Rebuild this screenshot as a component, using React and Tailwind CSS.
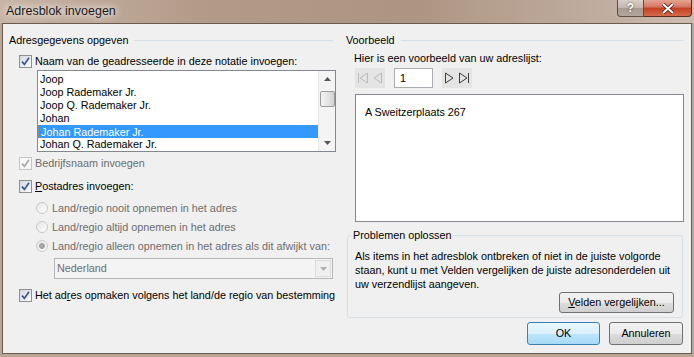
import React from 'react';

function Check({ disabled }) {
  return (
    <span
      className={`w-[13px] h-[13px] shrink-0 border flex items-center justify-center ${
        disabled ? 'border-[#c6c6c6] bg-[#f7f7f7]' : 'border-[#8e8f8f] bg-[linear-gradient(135deg,#d4d8de,#fbfbfb)]'
      }`}
    >
      <svg width="9" height="9" viewBox="0 0 9 9">
        <path d="M1 4.6 L3.4 7.4 L8 0.8" fill="none" stroke={disabled ? '#a9a9a9' : '#3b5592'} strokeWidth="1.7" />
      </svg>
    </span>
  );
}

function Radio({ selected }) {
  return (
    <span className="w-[12px] h-[12px] shrink-0 rounded-full border border-[#c8c8c8] bg-[linear-gradient(135deg,#e6e6e6,#fdfdfd)] flex items-center justify-center">
      {selected && <span className="w-[6px] h-[6px] rounded-full bg-[#a8a8a8] border border-[#9a9a9a]" />}
    </span>
  );
}

function GroupHeader({ label }) {
  return (
    <div className="h-[15px] flex items-center">
      <span>{label}</span>
      <span className="flex-1 h-px bg-[#d5dfe5] ml-[6px]" />
    </div>
  );
}

function NavBtn({ kind, disabled }) {
  const c = disabled ? '#bcbcbc' : '#3a3a3a';
  return (
    <span className="w-[15px] h-[20px] bg-[#e4e4e4] flex items-center justify-center">
      <svg width="15" height="20" viewBox="0 0 15 20">
        {kind === 'first' && (
          <>
            <line x1="3.5" y1="5" x2="3.5" y2="15" stroke={c} />
            <polygon points="12.5,5 5,10 12.5,15" fill="none" stroke={c} />
          </>
        )}
        {kind === 'prev' && <polygon points="11.5,5 4,10 11.5,15" fill="none" stroke={c} />}
        {kind === 'next' && <polygon points="3.5,5 11,10 3.5,15" fill="none" stroke={c} />}
        {kind === 'last' && (
          <>
            <polygon points="2.5,5 10,10 2.5,15" fill="none" stroke={c} />
            <line x1="11.5" y1="5" x2="11.5" y2="15" stroke={c} />
          </>
        )}
      </svg>
    </span>
  );
}

const names = ['Joop', 'Joop Rademaker Jr.', 'Joop Q. Rademaker Jr.', 'Johan', 'Johan Rademaker Jr.', 'Johan Q. Rademaker Jr.'];

export default function App() {
  return (
    <div className="w-[694px] h-[357px] bg-[#b9a596] flex flex-col font-['Liberation_Sans',Arial,sans-serif] text-[10.8px] text-black overflow-hidden whitespace-nowrap">
      {/* title bar */}
      <div className="h-[23px] shrink-0 flex items-start bg-[linear-gradient(90deg,#c7b4a6_0%,#b29a88_30%,#ad9583_60%,#c2b0a3_90%,#cdbdb1_100%)]">
        <span className="ml-[6px] mt-[3px] text-[12.5px] leading-[16px] text-[#1a1a1a] [text-shadow:0_0_6px_#ffffff,0_0_10px_#f4ece6]">
          Adresblok invoegen
        </span>
        <div className="ml-auto mr-[2px] flex">
          <span className="w-[27px] h-[17px] rounded-bl-[4px] border border-t-0 border-[#5e4e43] bg-[linear-gradient(#d9d0ca_0%,#c2b6ad_50%,#a89a90_50%,#b3a79f_100%)] flex items-center justify-center text-white font-bold text-[12px] [text-shadow:0_0_2px_#333]">
            ?
          </span>
          <span className="w-[48px] h-[17px] rounded-br-[4px] border border-t-0 border-l-0 border-[#5e2a20] bg-[linear-gradient(#e6a493_0%,#d2735e_45%,#c2401f_50%,#d56a4c_100%)] flex items-center justify-center">
            <svg width="14" height="11" viewBox="0 0 14 11">
              <path d="M2 1 L12 10 M12 1 L2 10" stroke="#4a1a10" strokeWidth="3.6" />
              <path d="M2 1 L12 10 M12 1 L2 10" stroke="#ffffff" strokeWidth="2" />
            </svg>
          </span>
        </div>
      </div>

      {/* client area */}
      <div className="flex-1 mx-[2px] mb-[3px] border border-[#6b5a4e] bg-[#f0f0f0] flex">
        {/* left column */}
        <div className="w-[338px] shrink-0 pl-[6px] pr-[8px] pt-[9px] flex flex-col">
          <GroupHeader label="Adresgegevens opgeven" />
          <label className="mt-[6px] h-[14px] ml-[10px] flex items-center gap-[3px]">
            <Check />
            <span>
              Naam van de <span className="underline">g</span>eadresseerde in deze notatie invoegen:
            </span>
          </label>
          <div className="mt-[2px] ml-[28px] w-[299px] h-[82px] shrink-0 border border-[#828790] bg-white flex">
            <div className="flex-1 pt-[2px] overflow-hidden">
              {names.map((n, i) => (
                <div
                  key={n}
                  className={`h-[13px] leading-[13px] pl-[2px] ${
                    i === 4 ? 'bg-[#3399ff] text-white border border-dotted border-[#c97a2c] leading-[11px]' : ''
                  }`}
                >
                  {n}
                </div>
              ))}
            </div>
            <div className="w-[17px] border-l border-[#e8e8e8] bg-[#f4f4f4] flex flex-col items-center">
              <svg width="17" height="17" viewBox="0 0 17 17">
                <polygon points="5,10 8.5,6 12,10" fill="#555" />
              </svg>
              <span className="mt-[3px] w-[15px] h-[16px] rounded-[2px] border border-[#9b9b9b] bg-[linear-gradient(90deg,#f4f4f4,#e2e2e2_60%,#d2d2d2)]" />
              <span className="flex-1" />
              <svg width="17" height="15" viewBox="0 0 17 15">
                <polygon points="5,5 12,5 8.5,9" fill="#555" />
              </svg>
            </div>
          </div>
          <label className="mt-[4px] h-[14px] ml-[10px] flex items-center gap-[3px] text-[#6d6d6d]">
            <Check disabled />
            <span>Bedrijfsnaam invoegen</span>
          </label>
          <label className="mt-[9px] h-[14px] ml-[10px] flex items-center gap-[3px]">
            <Check />
            <span>
              <span className="underline">P</span>ostadres invoegen:
            </span>
          </label>
          <div className="mt-[8px] h-[14px] ml-[27px] flex items-center gap-[4px] text-[#6d6d6d]">
            <Radio />
            <span>Land/regio nooit opnemen in het adres</span>
          </div>
          <div className="mt-[5px] h-[14px] ml-[27px] flex items-center gap-[4px] text-[#6d6d6d]">
            <Radio />
            <span>Land/regio altijd opnemen in het adres</span>
          </div>
          <div className="mt-[5px] h-[14px] ml-[27px] flex items-center gap-[4px] text-[#6d6d6d]">
            <Radio selected />
            <span>Land/regio alleen opnemen in het adres als dit afwijkt van:</span>
          </div>
          <div className="mt-[5px] ml-[45px] w-[279px] h-[21px] shrink-0 border border-[#b4b8bb] bg-[#f4f4f4] flex items-center text-[#6d6d6d]">
            <span className="pl-[2px] flex-1">Nederland</span>
            <span className="w-[16px] h-[17px] mr-[1px] border border-[#dadada] bg-[#f0f0f0] flex items-center justify-center">
              <svg width="7" height="4" viewBox="0 0 7 4">
                <polygon points="0,0 7,0 3.5,4" fill="#b0b0b0" />
              </svg>
            </span>
          </div>
          <label className="mt-[9px] h-[14px] ml-[10px] flex items-center gap-[3px]">
            <Check />
            <span>
              Het ad<span className="underline">r</span>es opmaken volgens het land/de regio van bestemming
            </span>
          </label>
        </div>

        {/* right column */}
        <div className="flex-1 pl-[5px] pr-[7px] pt-[9px] flex flex-col">
          <GroupHeader label="Voorbeeld" />
          <div className="mt-[3px] h-[14px] ml-[8px] flex items-center">Hier is een voorbeeld van uw adreslijst:</div>
          <div className="mt-[3px] ml-[9px] h-[20px] flex items-center">
            <NavBtn kind="first" disabled />
            <NavBtn kind="prev" disabled />
            <span className="ml-[9px] w-[39px] h-[20px] border border-[#abadb3] bg-white flex items-center pl-[5px]">1</span>
            <span className="ml-[9px] flex">
              <NavBtn kind="next" />
              <NavBtn kind="last" />
            </span>
          </div>
          <div className="mt-[6px] ml-[9px] h-[128px] shrink-0 border border-[#828790] bg-white pl-[9px] pt-[9px]">
            A Sweitzerplaats 267
          </div>
          <fieldset className="mt-[6px] ml-[1px] w-[336px] h-[90px] shrink-0 border border-[#d5dfe5] rounded-[3px] flex flex-col">
            <legend className="ml-[3px] px-[2px] leading-[14px]">Problemen oplossen</legend>
            <p className="pt-[7px] pl-[7px] leading-[14px]">
              Als items in het adresblok ontbreken of niet in de juiste volgorde
              <br />
              staan, kunt u met Velden vergelijken de juiste adresonderdelen uit
              <br />
              uw verzendlijst aangeven.
            </p>
            <div className="mt-[1px] pr-[8px] flex justify-end">
              <button className="w-[115px] h-[21px] rounded-[3px] border border-[#707070] bg-[linear-gradient(#f2f2f2_0%,#ebebeb_50%,#dddddd_50%,#cfcfcf_100%)]">
                <span className="underline">V</span>elden vergelijken...
              </button>
            </div>
          </fieldset>
          <div className="mt-[4px] mr-[1px] flex justify-end gap-[9px]">
            <button className="w-[73px] h-[23px] rounded-[3px] border border-[#3c7fb1] bg-[linear-gradient(#eaf6fd_0%,#d9f0fc_50%,#bee6fd_50%,#a7d9f5_100%)]">
              OK
            </button>
            <button className="w-[74px] h-[23px] rounded-[3px] border border-[#707070] bg-[linear-gradient(#f2f2f2_0%,#ebebeb_50%,#dddddd_50%,#cfcfcf_100%)]">
              Annuleren
            </button>
          </div>
        </div>
      </div>
    </div>
  );
}
